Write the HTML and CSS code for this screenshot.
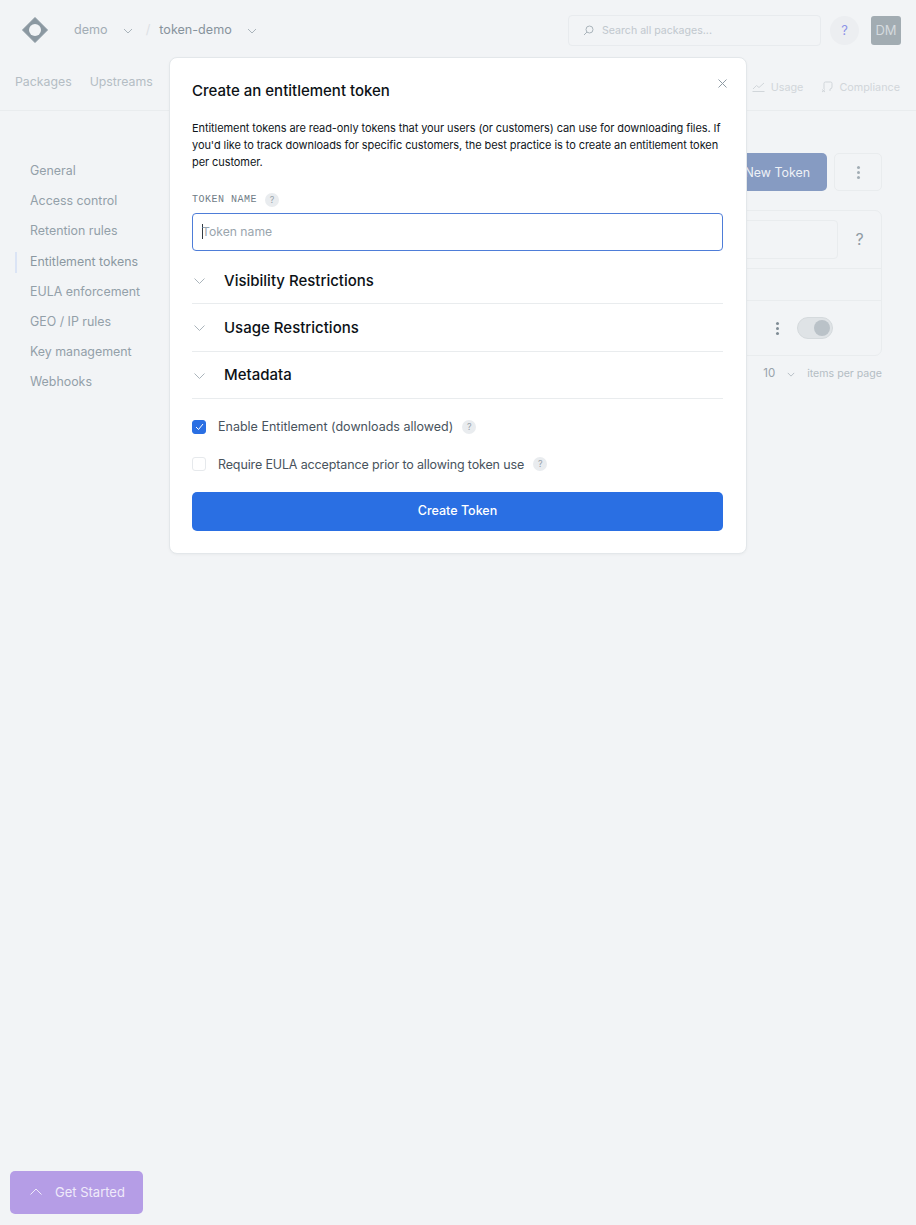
FILE: index.html
```html
<!DOCTYPE html>
<html lang="en">
<head>
    <meta charset="UTF-8">
    <title>Entitlement tokens</title>
    <link rel="stylesheet" href="styles.css">
</head>
<body>

    <header class="topbar">
        <svg class="logo" width="26" height="26" viewBox="0 0 26 26">
            <path d="M13 0.5 L25.5 13 L13 25.5 L0.5 13 Z" fill="#8b98a1" stroke="#8b98a1" stroke-linejoin="round"/>
            <circle cx="13" cy="13" r="6" fill="#f2f4f6"/>
        </svg>
        <span class="crumb">demo</span>
        <svg class="chev crumb-chev" width="10" height="6" viewBox="0 0 10 6"><path d="M1 1 L5 5 L9 1"/></svg>
        <span class="slash">/</span>
        <span class="crumb crumb-strong">token-demo</span>
        <svg class="chev crumb-chev" width="10" height="6" viewBox="0 0 10 6"><path d="M1 1 L5 5 L9 1"/></svg>
        <div class="search">
            <svg width="11" height="11" viewBox="0 0 11 11" class="search-icon"><circle cx="6.5" cy="4.5" r="3.5"/><path d="M4 7 L1 10"/></svg>
            <span>Search all packages...</span>
        </div>
        <div class="help-round">?</div>
        <div class="avatar">DM</div>
    </header>

    <nav class="subnav">
        <a class="subnav-link">Packages</a>
        <a class="subnav-link">Upstreams</a>
        <div class="subnav-right">
            <a class="subnav-small">
                <svg width="13" height="10" viewBox="0 0 13 10"><path d="M1 7 L4.5 3.5 L7 5.5 L12 1 M0.5 9.5 H12.5"/></svg>
                Usage
            </a>
            <a class="subnav-small">
                <svg width="12" height="12" viewBox="0 0 12 12"><path d="M3 8 V2.5 Q3 1 4.5 1 H9.5 Q11 1 11 2.5 V6 Q11 8 9 8 V10 M1 8.5 L4 11 M4 8.5 L1 11"/></svg>
                Compliance
            </a>
        </div>
    </nav>

    <div class="layout">
        <aside class="sidebar">
            <a class="side-link">General</a>
            <a class="side-link">Access control</a>
            <a class="side-link">Retention rules</a>
            <a class="side-link active">Entitlement tokens</a>
            <a class="side-link">EULA enforcement</a>
            <a class="side-link">GEO / IP rules</a>
            <a class="side-link">Key management</a>
            <a class="side-link">Webhooks</a>
        </aside>

        <main class="content">
            <div class="actions">
                <button class="btn-new">New Token</button>
                <button class="btn-more"><span class="dots"></span></button>
            </div>
            <div class="card">
                <div class="card-search">
                    <div class="card-input"></div>
                    <span class="card-help">?</span>
                </div>
                <div class="card-head"></div>
                <div class="card-row">
                    <span class="dots dots-dark"></span>
                    <span class="toggle"><span class="knob"></span></span>
                </div>
            </div>
            <div class="pager">
                <span class="pager-num">10</span>
                <svg class="chev" width="8" height="5" viewBox="0 0 10 6"><path d="M1 1 L5 5 L9 1"/></svg>
                <span class="pager-label">items per page</span>
            </div>
        </main>
    </div>

    <section class="modal">
        <svg class="modal-close" width="9" height="9" viewBox="0 0 9 9"><path d="M0.5 0.5 L8.5 8.5 M8.5 0.5 L0.5 8.5"/></svg>
        <h2 class="modal-title">Create an entitlement token</h2>
        <p class="modal-text">Entitlement tokens are read-only tokens that your users (or customers) can use for downloading files. If you'd like to track downloads for specific customers, the best practice is to create an entitlement token per customer.</p>

        <div class="field-label">
            <label>TOKEN NAME</label>
            <span class="hint">?</span>
        </div>
        <div class="token-input"><span class="caret"></span><span>Token name</span></div>

        <div class="groups">
            <div class="group">
                <svg class="chev group-chev" width="11" height="6" viewBox="0 0 11 6"><path d="M0.5 0.5 L5.5 5.5 L10.5 0.5"/></svg>
                <span>Visibility Restrictions</span>
            </div>
            <div class="group">
                <svg class="chev group-chev" width="11" height="6" viewBox="0 0 11 6"><path d="M0.5 0.5 L5.5 5.5 L10.5 0.5"/></svg>
                <span>Usage Restrictions</span>
            </div>
            <div class="group">
                <svg class="chev group-chev" width="11" height="6" viewBox="0 0 11 6"><path d="M0.5 0.5 L5.5 5.5 L10.5 0.5"/></svg>
                <span>Metadata</span>
            </div>
        </div>

        <div class="check-row first">
            <span class="box checked">
                <svg width="9" height="8" viewBox="0 0 9 8"><path d="M1 4 L3.5 6.5 L8 1"/></svg>
            </span>
            <span>Enable Entitlement (downloads allowed)</span>
            <span class="hint">?</span>
        </div>
        <div class="check-row tight">
            <span class="box"></span>
            <span>Require EULA acceptance prior to allowing token use</span>
            <span class="hint">?</span>
        </div>

        <button class="btn-create">Create Token</button>
    </section>

    <button class="get-started">
        <svg width="12" height="7" viewBox="0 0 12 7"><path d="M0.5 6.5 L6 1 L11.5 6.5"/></svg>
        Get Started
    </button>

</body>
</html>
```

FILE: styles.css
```css
* {
    box-sizing: border-box;
}
body {
    margin: 0;
    height: 1225px;
    overflow: hidden;
    background: #f2f4f6;
    font-family: Inter, "Liberation Sans", sans-serif;
    font-size: 13px;
    color: #8f9ba4;
}
svg {
    flex: none;
    fill: none;
}

.chev path {
    stroke: #aab4bb;
    stroke-width: 1;
    fill: none;
}

/* top bar */
.topbar {
    display: flex;
    align-items: center;
    height: 60px;
    padding: 0 15px 0 22px;
}
.logo {
    margin-right: 26px;
}
.crumb {
    margin-bottom: 2px;
    font-size: 12.6px;
    color: #a3adb5;
}
.crumb-strong {
    color: #87939c;
}
.crumb-chev {
    margin: 2px 0 0 15px;
}
.slash {
    margin: 0 9px 2px 13px;
    color: #dde1e5;
}
.search {
    display: flex;
    align-items: center;
    gap: 8px;
    width: 253px;
    height: 31px;
    margin-left: auto;
    padding-left: 14px;
    border: 1px solid #e8ebee;
    border-radius: 4px;
    font-size: 10.6px;
    color: #c1c8ce;
}
.search-icon circle,
.search-icon path {
    stroke: #aab4bb;
}
.help-round {
    width: 29px;
    height: 29px;
    margin-left: 9px;
    border-radius: 50%;
    background: #eceef1;
    color: #8d93e8;
    line-height: 29px;
    text-align: center;
}
.avatar {
    width: 30px;
    height: 29px;
    margin-left: 12px;
    border-radius: 3px;
    background: #a2acb2;
    color: #d5dade;
    line-height: 29px;
    text-align: center;
}

/* sub navigation */
.subnav {
    display: flex;
    align-items: center;
    gap: 18px;
    height: 51px;
    padding: 0 16px 8px 15px;
    border-bottom: 1px solid #e9ecee;
}
.subnav-link {
    font-size: 12.3px;
    color: #b4bdc4;
}
.subnav-right {
    display: flex;
    gap: 18px;
    margin-left: auto;
    margin-top: 12px;
}
.subnav-small {
    display: flex;
    align-items: center;
    gap: 6px;
    font-size: 10.8px;
    color: #d1d6da;
}
.subnav-small svg path {
    stroke: #d1d6da;
}

/* page body */
.layout {
    display: flex;
}
.sidebar {
    display: flex;
    flex-direction: column;
    width: 170px;
    padding: 45px 0 0 15px;
}
.side-link {
    position: relative;
    height: 30.2px;
    padding-left: 15px;
    font-size: 12.4px;
    line-height: 30px;
    color: #93a0a9;
}
.side-link.active {
    color: #8b98a1;
}
.side-link.active::before {
    content: "";
    position: absolute;
    top: 5px;
    left: 0;
    width: 2px;
    height: 21px;
    background: #dbe4f5;
}
.content {
    flex: 1;
    padding: 42px 34px 0 0;
}
.actions {
    display: flex;
    justify-content: flex-end;
    gap: 7px;
}
.btn-new {
    width: 160px;
    height: 38px;
    padding: 0 17px 0 0;
    border: none;
    border-radius: 5px;
    background: #869bc2;
    color: #eef1f6;
    font: inherit;
    font-size: 12.4px;
    text-align: right;
}
.btn-more {
    display: flex;
    align-items: center;
    justify-content: center;
    width: 48px;
    height: 38px;
    border: 1px solid #e9ecee;
    border-radius: 5px;
    background: none;
}
.dots {
    width: 3px;
    height: 3px;
    border-radius: 50%;
    background: #a2adb5;
    box-shadow: 0 -5px 0 #a2adb5, 0 5px 0 #a2adb5;
}
.dots-dark {
    background: #7f8c95;
    box-shadow: 0 -5px 0 #7f8c95, 0 5px 0 #7f8c95;
}
.card {
    height: 146px;
    margin-top: 19px;
    border: 1px solid #e9ecee;
    border-radius: 7px;
}
.card-search {
    display: flex;
    align-items: center;
    height: 58px;
    padding: 0 0 0 10px;
    border-bottom: 1px solid #e9ecee;
}
.card-input {
    flex: 1;
    height: 39px;
    border: 1px solid #e9ecee;
    border-radius: 4px;
}
.card-help {
    width: 43px;
    margin-bottom: 2px;
    font-size: 16px;
    text-align: center;
    color: #909ca5;
}
.card-head {
    height: 32px;
    border-bottom: 1px solid #e9ecee;
}
.card-row {
    display: flex;
    align-items: center;
    justify-content: flex-end;
    gap: 18px;
    height: 54px;
    padding-right: 48px;
}
.toggle {
    display: flex;
    align-items: center;
    justify-content: flex-end;
    width: 36px;
    height: 22px;
    padding-right: 2px;
    border: 1px solid #d5dadd;
    border-radius: 11px;
    background: #dfe3e6;
}
.knob {
    width: 16px;
    height: 16px;
    border-radius: 50%;
    background: #bac2c8;
}
.pager {
    display: flex;
    align-items: center;
    justify-content: flex-end;
    height: 34px;
    font-size: 10.6px;
}
.pager-num {
    font-size: 11.5px;
    color: #98a3ab;
}
.pager .chev {
    margin: 2px 12px 0 12px;
}
.pager-label {
    color: #b4bdc4;
}

/* modal */
.modal {
    position: absolute;
    top: 57px;
    left: 169px;
    width: 578px;
    height: 497px;
    padding: 0 23px 0 22px;
    border: 1px solid #e3e7ea;
    border-radius: 8px;
    background: #fff;
    box-shadow: 0 1px 3px rgba(0, 0, 0, 0.04);
}
.modal-close {
    position: absolute;
    top: 21px;
    right: 19px;
}
.modal-close path {
    stroke: #8f9ba4;
}
.modal-title {
    margin: 23px 0 0;
    font-size: 15px;
    font-weight: 500;
    line-height: 19px;
    color: #0c1116;
}
.modal-text {
    margin: 20px 0 0;
    font-size: 11px;
    letter-spacing: -0.08px;
    line-height: 17px;
    color: #10161b;
}
.field-label {
    display: flex;
    align-items: center;
    gap: 8px;
    height: 15px;
    margin-top: 21px;
}
.field-label label {
    font-family: "Liberation Mono", monospace;
    font-size: 10px;
    letter-spacing: 0.5px;
    color: #6f7c86;
}
.hint {
    display: inline-block;
    width: 14px;
    height: 14px;
    border-radius: 50%;
    background: #e9ecef;
    font-size: 9px;
    line-height: 14px;
    text-align: center;
    color: #98a3ab;
}
.token-input {
    display: flex;
    align-items: center;
    height: 38px;
    margin-top: 6px;
    padding: 0 0 1px 9px;
    border: 1px solid #4e7dd8;
    border-radius: 4px;
    font-size: 12.2px;
    color: #9aa5ad;
}
.caret {
    width: 1px;
    height: 15px;
    margin-right: -1px;
    background: #333b42;
}
.groups {
    margin-top: 6px;
}
.group {
    display: flex;
    align-items: center;
    height: 47.3px;
    border-bottom: 1px solid #e9ecee;
    font-size: 15px;
    font-weight: 500;
    color: #0c1116;
}
.group-chev {
    margin: 2px 19px 0 2px;
}
.check-row {
    display: flex;
    align-items: center;
    gap: 12px;
    height: 16px;
    margin-top: 21.5px;
    font-size: 12.5px;
    color: #48535d;
}
.check-row.first {
    margin-top: 19.7px;
}
.check-row.tight {
    letter-spacing: -0.14px;
}
.check-row .hint {
    margin-left: -3px;
}
.box {
    display: flex;
    align-items: center;
    justify-content: center;
    width: 14px;
    height: 14px;
    border: 1px solid #e6e9ec;
    border-radius: 3px;
}
.box.checked {
    border-color: #2a6fe3;
    background: #2a6fe3;
}
.box svg path {
    stroke: #fff;
    stroke-width: 1;
}
.btn-create {
    display: block;
    width: 100%;
    height: 39px;
    margin-top: 19.5px;
    padding-bottom: 2px;
    border: none;
    border-radius: 5px;
    background: #2a6fe3;
    color: #fff;
    font: inherit;
    font-size: 12.5px;
    font-weight: 500;
}

.get-started {
    position: fixed;
    left: 10px;
    bottom: 11px;
    display: flex;
    align-items: center;
    gap: 13px;
    width: 133px;
    height: 43px;
    padding: 0 0 2px 20px;
    border: none;
    border-radius: 5px;
    background: #b59de6;
    color: #efeafa;
    font: inherit;
}
.get-started svg path {
    stroke: #efeafa;
}
```
